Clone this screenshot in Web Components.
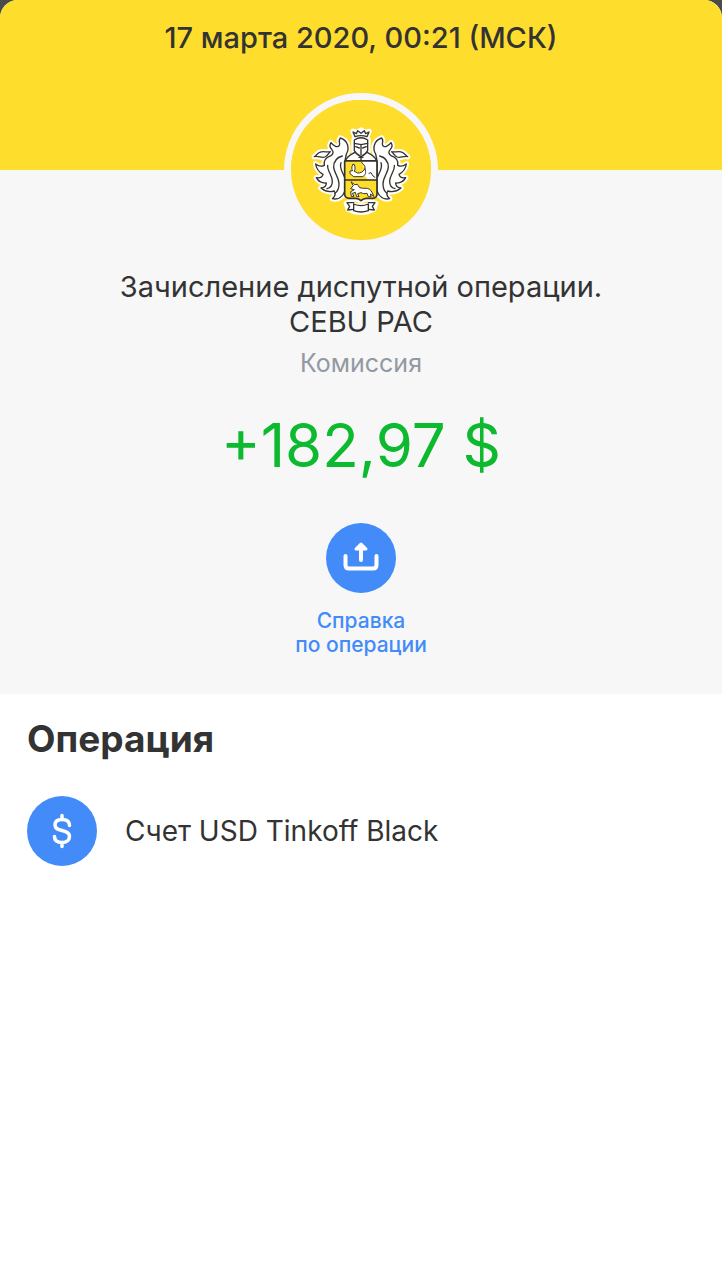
<!DOCTYPE html>
<html lang="ru">
<head>
<meta charset="utf-8">
<meta name="viewport" content="width=device-width, initial-scale=1">
<title>Операция</title>
<style>
  :root {
    --c-brand: #ffdd2d;
    --c-surface: #f7f7f7;
    --c-text: #333333;
    --c-muted: #9299a2;
    --c-accent: #428bf9;
    --c-income: #0cb92f;
  }

  body {
    margin: 0;
    background: #4a4c4b;
    color: var(--c-text);
    font-family: Inter, "Noto Sans", sans-serif;
  }
</style>
</head>
<body>
<operation-sheet>
  <operation-header slot="header">17 марта 2020, 00:21 (МСК)</operation-header>
  <operation-summary>
    <bank-crest slot="logo"></bank-crest>
    <span slot="title">Зачисление диспутной операции.<br>CEBU PAC</span>
    <span slot="category">Комиссия</span>
    <span slot="amount">+182,97 $</span>
    <share-button slot="action">Справка<br>по операции</share-button>
  </operation-summary>
  <operation-details heading="Операция">
    <account-row>Счет USD Tinkoff Black</account-row>
  </operation-details>
</operation-sheet>

<script>
function makeTemplate(html) {
  const template = document.createElement('template');
  template.innerHTML = html;
  return template;
}

class BaseElement extends HTMLElement {
  constructor() {
    super();

    this.attachShadow({mode: 'open'});
    this.shadowRoot.appendChild(this.constructor.template.content.cloneNode(true));
  }
}

class OperationSheet extends BaseElement {
  static template = makeTemplate(`
    <style>
      :host {
        display: flex;
        flex-direction: column;
        min-height: 100vh;
        background: #fff;
        border-radius: 18px 18px 0 0;
        overflow: hidden;
      }
    </style>
    <slot name="header"></slot>
    <main><slot></slot></main>
  `);
}

class OperationHeader extends BaseElement {
  static template = makeTemplate(`
    <style>
      :host {
        display: block;
        min-height: 150px;
        padding-top: 20px;
        background: var(--c-brand);
        text-align: center;
      }

      time {
        font-size: 29px;
        line-height: 36px;
        font-weight: 500;
      }
    </style>
    <time datetime="2020-03-17T00:21+03:00"><slot></slot></time>
  `);
}

class OperationSummary extends BaseElement {
  static template = makeTemplate(`
    <style>
      :host {
        display: block;
        background: var(--c-surface);
      }

      section {
        display: flex;
        flex-direction: column;
        align-items: center;
        padding: 0 24px 37px;
        text-align: center;
      }

      /* the logo hangs half over the header */
      .logo {
        margin-top: -77px;
        border: 7px solid var(--c-surface);
        border-radius: 50%;
      }

      h1, p {
        margin: 0;
        font-weight: 400;
      }

      h1 {
        margin-top: 22px;
        font-size: 29px;
        line-height: 35px;
      }

      .category {
        margin-top: 8px;
        color: var(--c-muted);
        font-size: 25px;
        line-height: 32px;
      }

      .amount {
        margin: 28px 0 40px;
        color: var(--c-income);
        font-size: 60px;
        line-height: 76px;
      }
    </style>
    <section>
      <div class="logo"><slot name="logo"></slot></div>
      <h1><slot name="title"></slot></h1>
      <p class="category"><slot name="category"></slot></p>
      <p class="amount"><slot name="amount"></slot></p>
      <slot name="action"></slot>
    </section>
  `);
}

// One side of the mantling; the other one is its mirror image.
const mantling = `
  <path d="M106 54C130 62 134 86 124 102L120 122V212C114 230 100 240 82 236C92 228 92 220 88 213C76 217 60 214 48 204C60 203 64 197 64 189C52 190 40 184 34 173C46 175 52 171 54 163C43 157 34 147 32 132C42 140 50 140 58 136C55 122 64 112 78 107C86 101 86 95 80 88C73 81 74 74 78 68C86 79 98 84 103 76C107 68 98 63 106 54Z"/>
  <path d="M28 110C34 108 36 100 44 97C54 92 66 98 76 95C70 100 68 108 60 111C50 116 40 106 28 110Z"/>
`;
const veins = `
  <path d="M112 108C96 112 86 124 86 142C88 160 102 172 102 192C102 206 98 214 90 220M68 136C66 152 82 166 82 184C82 196 76 204 66 206M108 128C102 144 112 154 118 170"/>
`;

class BankCrest extends BaseElement {
  static template = makeTemplate(`
    <style>
      :host {
        display: flex;
        align-items: center;
        justify-content: center;
        width: 140px;
        height: 140px;
        border-radius: 50%;
        background: var(--c-brand);
      }
    </style>
    <svg width="112" height="100" viewBox="0 0 336 300" fill="none" stroke-linejoin="round" stroke-linecap="round" aria-hidden="true">
      <g fill="#fff" stroke="#fff" stroke-width="16">
        ${mantling}
        <g transform="matrix(-1 0 0 1 336 0)">${mantling}</g>
        <path d="M144 34L150 50H186L192 34L180 38L168 30L156 38ZM147 58H189V104L216 122V225L168 242L120 225V122L147 104Z"/>
        <path d="M124 250L140 246L144 254C160 260 176 260 192 254L196 246L212 250L206 268L190 274C176 278 160 278 146 274L130 268Z"/>
      </g>
      <g fill="#fff" stroke="#35332d" stroke-width="4">
        ${mantling}${veins}
        <g transform="matrix(-1 0 0 1 336 0)">${mantling}${veins}</g>
        <path d="M122 122C126 108 138 104 148 98H188C198 104 210 108 214 122Z"/>
        <path d="M148 60C160 52 176 52 188 60V92C184 100 176 106 168 110C160 106 152 100 148 92Z"/>
        <path d="M148 70L168 74L188 70M168 74V104M152 80L163 84M184 80L173 84M162 112H174M168 112V122"/>
        <path d="M150 50L144 36L154 41L158 32L168 40L178 32L182 41L192 36L186 50C174 46 162 46 150 50Z"/>
        <path d="M146 248L126 248L134 259L128 270L146 268M190 248L210 248L202 259L208 270L190 268"/>
        <path d="M146 252C160 258 176 258 190 252V272C176 277 160 277 146 272Z"/>
      </g>
      <path d="M119 123H216V222C216 232 210 235 202 235H184C176 235 172 238 168 242C164 238 160 235 152 235H134C124 235 119 232 119 222Z" fill="#ffdd2d"/>
      <path d="M172 124H215V180H190L180 168L178 150Z" fill="#fff"/>
      <g stroke="#35332d" stroke-width="3">
        <path d="M143 134C139 142 140 148 143 152L135 153V161L146 170H172C182 166 184 158 180 146C174 156 166 160 158 159L148 154C151 148 151 140 148 134Z" fill="#fff"/>
        <path d="M180 146C182 138 176 132 170 128M192 160L198 158L204 168L210 172"/>
      </g>
      <path d="M139 186L149 194L157 193L164 203C174 207 186 202 194 208C200 212 202 220 207 229L196 222L198 230H190L186 220C178 222 172 220 168 218L158 221L162 230H155L151 217L142 220L147 229H139L137 215L148 209L137 206L144 198Z" fill="#fff" stroke="#35332d" stroke-width="3"/>
      <path d="M119 123H216V222C216 232 210 235 202 235H184C176 235 172 238 168 242C164 238 160 235 152 235H134C124 235 119 232 119 222ZM119 180H216" stroke="#35332d" stroke-width="5"/>
    </svg>
  `);
}

class ShareButton extends BaseElement {
  static template = makeTemplate(`
    <style>
      :host {
        display: block;
      }

      button {
        display: flex;
        flex-direction: column;
        align-items: center;
        gap: 16px;
        padding: 0;
        border: 0;
        background: none;
        color: var(--c-accent);
        font: inherit;
        font-size: 21px;
        line-height: 24px;
        font-weight: 500;
        cursor: pointer;
      }
    </style>
    <button type="button">
      <svg width="70" height="70" viewBox="0 0 70 70" fill="none" stroke="#fff" stroke-width="4" stroke-linecap="round" stroke-linejoin="round" aria-hidden="true">
        <circle cx="35" cy="35" r="35" fill="#428bf9" stroke="none"/>
        <path d="M19.500 33V42Q19.500 45.500 23 45.500H47Q50.500 45.500 50.500 42V33"/>
        <path d="M35 37V24"/>
        <path d="M30 26L35 21L40 26Z" fill="#fff" stroke-width="3"/>
      </svg>
      <span><slot></slot></span>
    </button>
  `);
}

class OperationDetails extends BaseElement {
  static template = makeTemplate(`
    <style>
      :host {
        display: block;
        padding: 23px 27px;
      }

      h2 {
        margin: 0 0 35px;
        font-size: 37px;
        line-height: 44px;
        font-weight: 700;
      }
    </style>
    <h2></h2>
    <slot></slot>
  `);

  connectedCallback() {
    this.shadowRoot.querySelector('h2').textContent = this.getAttribute('heading');
  }
}

class AccountRow extends BaseElement {
  static template = makeTemplate(`
    <style>
      :host {
        display: flex;
        align-items: center;
        gap: 28px;
        font-size: 28px;
        line-height: 35px;
      }

      svg {
        flex: none;
      }
    </style>
    <svg width="70" height="70" viewBox="0 0 70 70" fill="none" stroke="#fff" stroke-width="3.500" stroke-linecap="round" aria-hidden="true">
      <circle cx="35" cy="35" r="35" fill="#428bf9" stroke="none"/>
      <path d="M42.500 29.500C42.500 25.500 39.500 23.500 35 23.500C30.500 23.500 28 25.500 28 29C28 32.500 30.500 33.500 35 34.500C40 35.500 42.500 37 42.500 40.500C42.500 44 39.500 46.500 35 46.500C30 46.500 27.500 44 27.500 40.500M35 19.500V23M35 47V50.500"/>
    </svg>
    <span><slot></slot></span>
  `);
}

customElements.define('operation-sheet', OperationSheet);
customElements.define('operation-header', OperationHeader);
customElements.define('operation-summary', OperationSummary);
customElements.define('bank-crest', BankCrest);
customElements.define('share-button', ShareButton);
customElements.define('operation-details', OperationDetails);
customElements.define('account-row', AccountRow);
</script>
</body>
</html>
